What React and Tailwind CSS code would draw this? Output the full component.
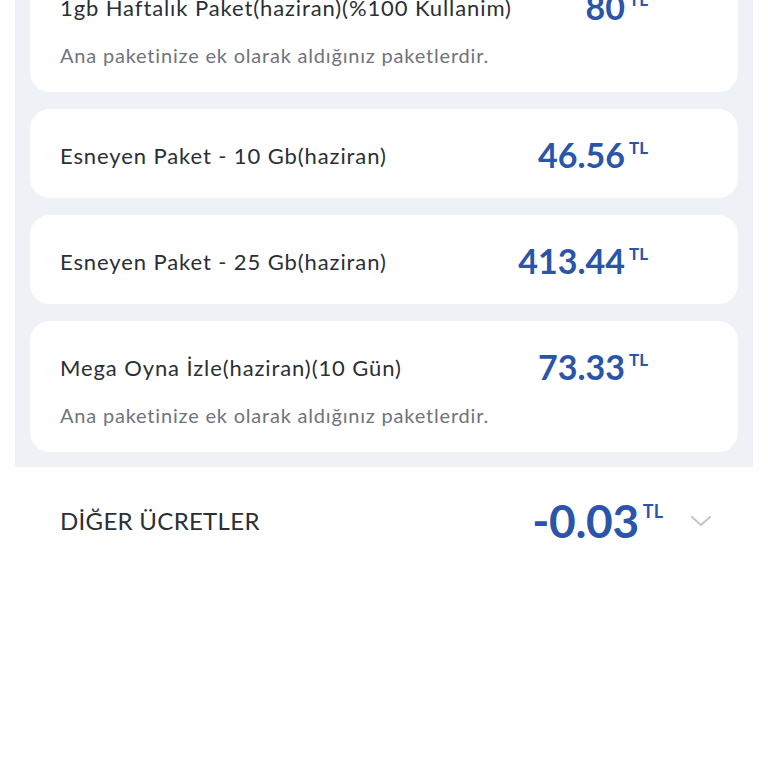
import React from "react";

const items = [
    { title: "1gb Haftalık Paket(haziran)(%100 Kullanim)", price: "80", note: true },
    { title: "Esneyen Paket - 10 Gb(haziran)", price: "46.56" },
    { title: "Esneyen Paket - 25 Gb(haziran)", price: "413.44" },
    { title: "Mega Oyna İzle(haziran)(10 Gün)", price: "73.33", note: true },
];

const Price = ({ value, big }) => (
    <div className="flex items-start">
        <span className={`font-bold text-[#2a55a8] leading-none ${big ? "text-[46px] tracking-[-0.3px]" : "text-[34px]"}`}>
            {value}
        </span>
        <span className={`font-bold text-[#2a55a8] leading-none ml-[4px] ${big ? "text-[18px] mt-[4px]" : "text-[17px] mt-[1px]"}`}>TL</span>
    </div>
);

const PackageCard = ({ title, price, note }) => (
    <div className="bg-white rounded-[20px] pl-[30px] pr-[90px] pt-[28px] pb-[25px]">
        <div className="flex items-center justify-between h-[36px]">
            <span className="text-[22px] tracking-[0.9px] text-[#2b2f36]">{title}</span>
            <Price value={price} />
        </div>
        {note && (
            <p className="mt-[18px] text-[20px] leading-[24px] tracking-[0.8px] text-[#70747b]">
                Ana paketinize ek olarak aldığınız paketlerdir.
            </p>
        )}
    </div>
);

export default function App() {
    return (
        <div className="w-[768px] h-[768px] overflow-hidden bg-white font-['Lato',sans-serif]">
            <div className="-mt-[39px] mx-[15px] bg-[#eef1f5] px-[15px] pb-[15px] flex flex-col gap-[17px]">
                {items.map((it) => (
                    <PackageCard key={it.title} {...it} />
                ))}
            </div>

            {/* other fees row */}
            <div className="flex items-center justify-between pl-[60px] pr-[56px] pt-[31px]">
                <span className="text-[24px] tracking-[0.3px] text-[#2b2f36] uppercase">DİĞER ÜCRETLER</span>
                <div className="flex items-center gap-[27px]">
                    <Price value="-0.03" big />
                    <svg width="22" height="12" viewBox="0 0 22 12" fill="none">
                        <path d="M2 2l9 8 9-8" stroke="#c4c7cc" strokeWidth="2.2" strokeLinecap="round" strokeLinejoin="round" />
                    </svg>
                </div>
            </div>
        </div>
    );
}
